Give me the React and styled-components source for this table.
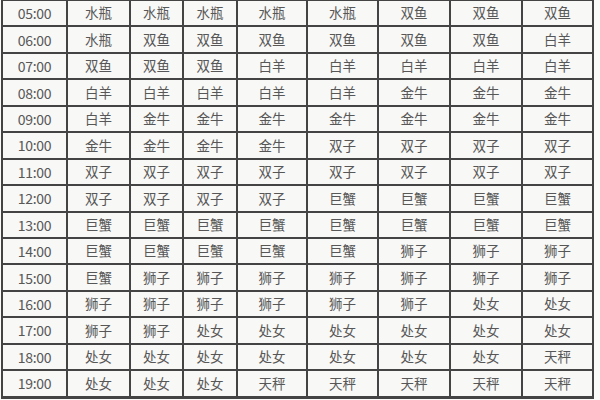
import React from "react";
import styled, {createGlobalStyle} from "styled-components";

const Global_Style = createGlobalStyle`
    html, body {
        margin: 0;
        padding: 0;
        background: #fbfbf9;
        overflow: hidden;
    }
`;

const columnWidths = [63, 61, 51, 52, 68, 69, 70, 70, 69];

const rows = [
    ["05:00", "水瓶", "水瓶", "水瓶", "水瓶", "水瓶", "双鱼", "双鱼", "双鱼"],
    ["06:00", "水瓶", "双鱼", "双鱼", "双鱼", "双鱼", "双鱼", "双鱼", "白羊"],
    ["07:00", "双鱼", "双鱼", "双鱼", "白羊", "白羊", "白羊", "白羊", "白羊"],
    ["08:00", "白羊", "白羊", "白羊", "白羊", "白羊", "金牛", "金牛", "金牛"],
    ["09:00", "白羊", "金牛", "金牛", "金牛", "金牛", "金牛", "金牛", "金牛"],
    ["10:00", "金牛", "金牛", "金牛", "金牛", "双子", "双子", "双子", "双子"],
    ["11:00", "双子", "双子", "双子", "双子", "双子", "双子", "双子", "双子"],
    ["12:00", "双子", "双子", "双子", "双子", "巨蟹", "巨蟹", "巨蟹", "巨蟹"],
    ["13:00", "巨蟹", "巨蟹", "巨蟹", "巨蟹", "巨蟹", "巨蟹", "巨蟹", "巨蟹"],
    ["14:00", "巨蟹", "巨蟹", "巨蟹", "巨蟹", "巨蟹", "狮子", "狮子", "狮子"],
    ["15:00", "巨蟹", "狮子", "狮子", "狮子", "狮子", "狮子", "狮子", "狮子"],
    ["16:00", "狮子", "狮子", "狮子", "狮子", "狮子", "狮子", "处女", "处女"],
    ["17:00", "狮子", "狮子", "处女", "处女", "处女", "处女", "处女", "处女"],
    ["18:00", "处女", "处女", "处女", "处女", "处女", "处女", "处女", "天秤"],
    ["19:00", "处女", "处女", "处女", "天秤", "天秤", "天秤", "天秤", "天秤"],
];

const Page_SC = styled.div`
    width: 600px;
    height: 400px;
    overflow: hidden;
`;

const Table_SC = styled.div`
    display: grid;
    grid-template-columns: ${(props) => props.columns.map((w) => `${w}px`).join(" ")};
    grid-auto-rows: 24.45px;
    gap: 2px;
    padding: 2px 2px 3px;
    margin: -1px 0 0 1px;
    width: max-content;
    background: #444444;
`;

const Cell_SC = styled.div`
    display: flex;
    align-items: center;
    justify-content: center;
    background: #f8f8f6;
    color: #575757;
    font-family: "Noto Sans CJK SC", "Noto Sans", sans-serif;
    font-size: ${(props) => (props.time ? "14px" : "13.5px")};
    letter-spacing: ${(props) => (props.time ? "-0.3px" : "0")};
    line-height: 1;
`;

const App = () => {
    return(
        <Page_SC>
            <Global_Style />
            <Table_SC columns={columnWidths}>
                {rows.map((row) =>
                    row.map((text, i) => (
                        <Cell_SC key={row[0] + i} time={i === 0}>
                            {text}
                        </Cell_SC>
                    ))
                )}
            </Table_SC>
        </Page_SC>
    );
};

export default App;
